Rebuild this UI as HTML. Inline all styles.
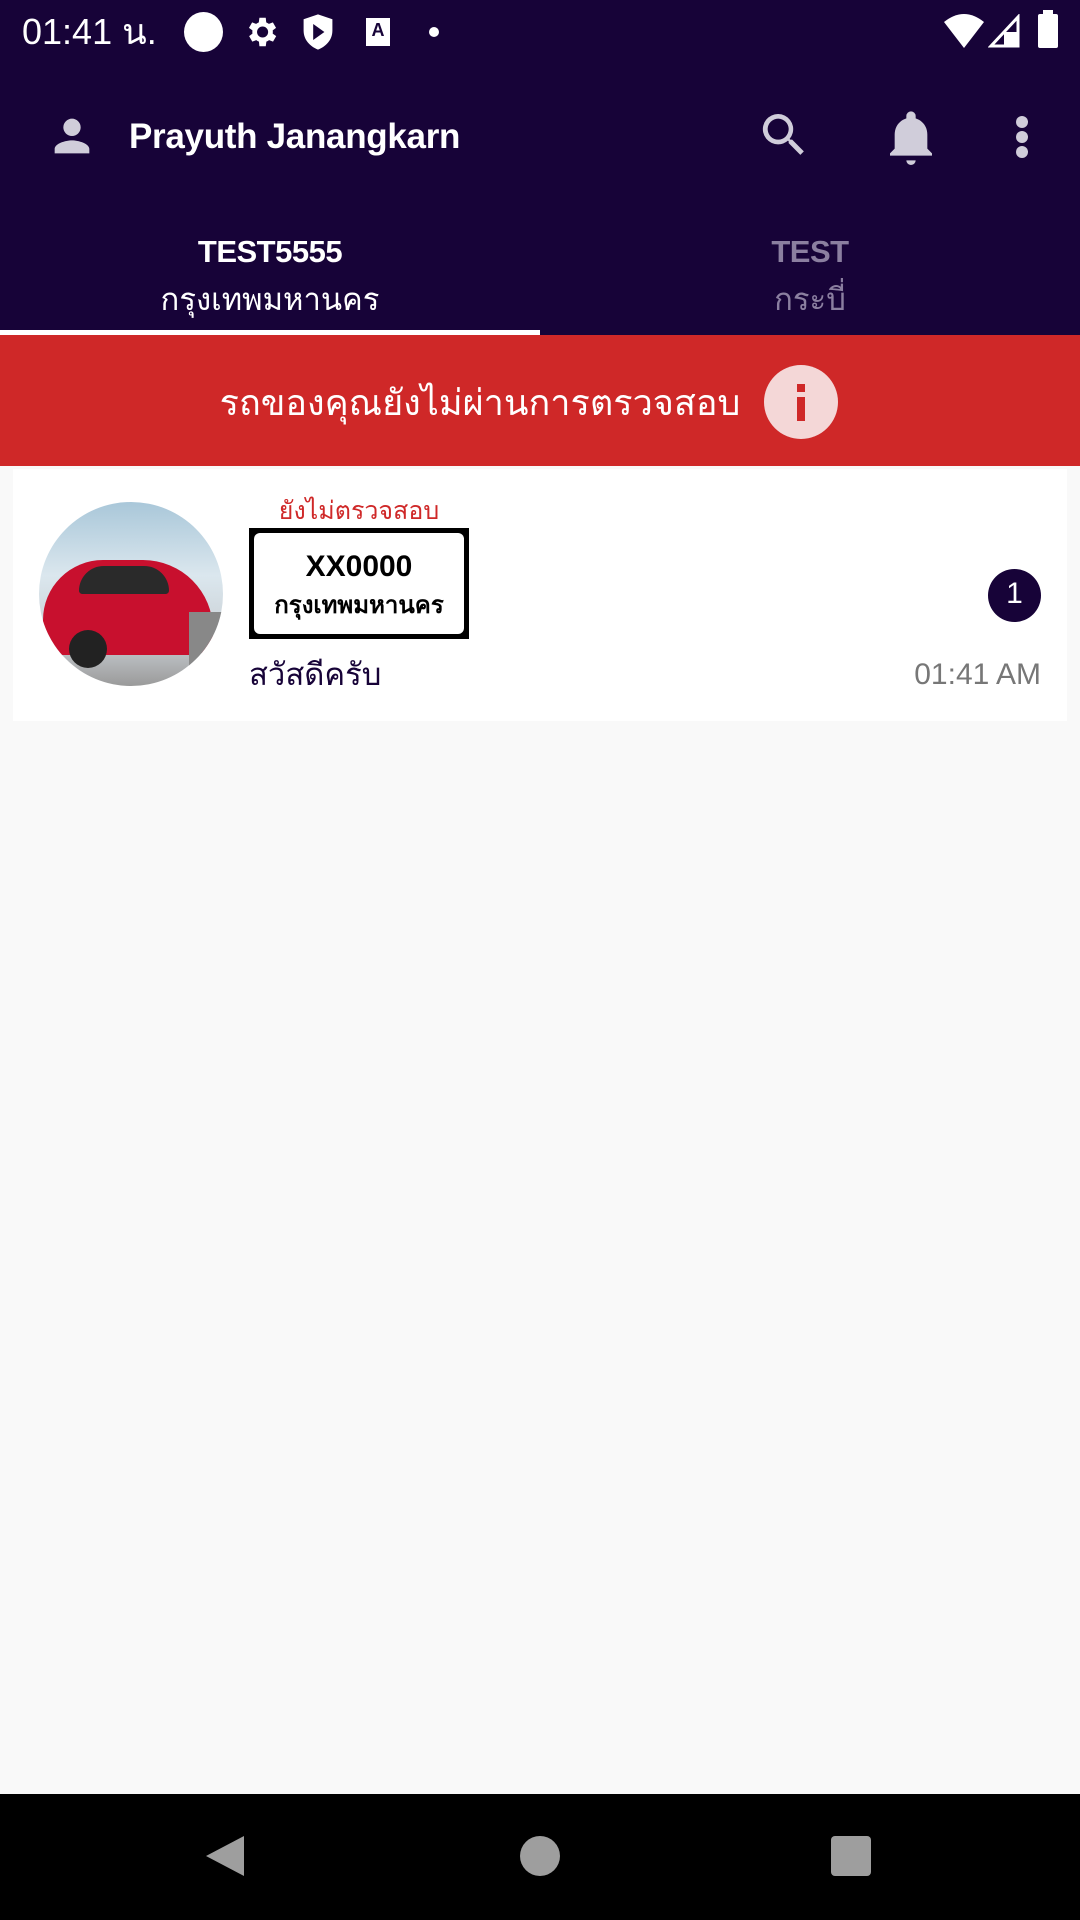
<!DOCTYPE html>
<html><head><meta charset="utf-8"><style>
*{margin:0;padding:0;box-sizing:border-box}
body{width:1080px;height:1920px;background:#f9f9f9;font-family:"Liberation Sans","Noto Sans CJK SC",sans-serif;position:relative;overflow:hidden}
.abs{position:absolute}
</style></head><body>
<div class="abs" style="left:0;top:0;width:1080px;height:335px;background:#170338"></div>
<!-- status bar -->
<div class="abs" style="left:22px;top:12px;color:#fff;font-size:36px;line-height:40px">01:41 น.</div>
<div class="abs" style="left:184px;top:12px;width:39px;height:40px;border-radius:50%;background:#fff"></div>
<svg class="abs" style="left:242px;top:12px" width="38" height="40" viewBox="0 0 24 24"><path fill="#fff" d="M19.4 13a7.5 7.5 0 000-2l2.1-1.6-2-3.5-2.5 1a7 7 0 00-1.700-1L15 3h-4l-.4 2.9a7 7 0 00-1.7 1l-2.5-1-2 3.5L6.6 11a7.5 7.5 0 000 2l-2.1 1.6 2 3.5 2.5-1a7 7 0 001.7 1L11 21h4l.4-2.9a7 7 0 001.7-1l2.5 1 2-3.5zM13 15.5a3.5 3.5 0 110-7 3.5 3.5 0 010 7z"/></svg>
<svg class="abs" style="left:302px;top:12px" width="32" height="40" viewBox="0 0 20 24"><path fill="#fff" d="M10 1L1 4v7c0 6 4 10 9 12 5-2 9-6 9-12V4z"/><path fill="#170338" d="M7 7v10l7-5z"/></svg>
<div class="abs" style="left:366px;top:18px;width:24px;height:28px;background:#fff;color:#170338;font-size:18px;font-weight:bold;text-align:center;line-height:24px">A</div>
<div class="abs" style="left:429px;top:27px;width:10px;height:10px;border-radius:50%;background:#fff"></div>
<svg class="abs" style="left:944px;top:14px" width="40" height="34" viewBox="0 0 40 34"><path fill="#fff" d="M0 8Q20-8 40 8L20 34z"/></svg>
<svg class="abs" style="left:988px;top:14px" width="32" height="34" viewBox="0 0 32 34"><path fill="none" stroke="#fff" stroke-width="3" d="M30 3V32H3z"/><path fill="#fff" d="M16 18h14v14H16z"/></svg>
<div class="abs" style="left:1038px;top:14px;width:20px;height:34px;background:#fff;border-radius:2px"></div>
<div class="abs" style="left:1043px;top:10px;width:10px;height:6px;background:#fff"></div>
<!-- toolbar -->
<svg class="abs" style="left:46px;top:110px" width="52" height="52" viewBox="0 0 24 24"><path fill="#d0cdda" d="M12 12a4 4 0 100-8 4 4 0 000 8zm0 2c-3 0-8 1.5-8 4v2h16v-2c0-2.5-5-4-8-4z"/></svg>
<div class="abs" style="left:129px;top:116px;color:#fff;font-size:35px;font-weight:bold;line-height:42px;letter-spacing:-0.3px">Prayuth Janangkarn</div>
<svg class="abs" style="left:756px;top:107px" width="56" height="56" viewBox="0 0 24 24"><path fill="#d0cdda" d="M15.5 14h-.8l-.3-.3A6.5 6.5 0 109.5 16a6.5 6.5 0 004.2-1.6l.3.3v.8l5 5 1.5-1.5zm-6 0a4.5 4.5 0 110-9 4.5 4.5 0 010 9z"/></svg>
<svg class="abs" style="left:883px;top:106px" width="56" height="62" viewBox="0 0 24 26"><path fill="#d0cdda" d="M12 25a2 2 0 002-2h-4a2 2 0 002 2zm7-7v-6c0-3.5-2-6-5-7V4a2 2 0 00-4 0v1c-3 1-5 3.5-5 7v6l-2 2v1h18v-1z"/></svg>
<div class="abs" style="left:1016px;top:116px;width:12px;height:12px;border-radius:50%;background:#d0cdda"></div>
<div class="abs" style="left:1016px;top:131px;width:12px;height:12px;border-radius:50%;background:#d0cdda"></div>
<div class="abs" style="left:1016px;top:146px;width:12px;height:12px;border-radius:50%;background:#d0cdda"></div>
<!-- tabs -->
<div class="abs" style="left:0;top:234px;width:540px;text-align:center;color:#fff;font-size:31px;font-weight:bold;letter-spacing:-0.5px">TEST5555</div>
<div class="abs" style="left:0;top:274px;width:540px;text-align:center;color:#fff;font-size:31px">กรุงเทพมหานคร</div>
<div class="abs" style="left:540px;top:234px;width:540px;text-align:center;color:#8b7fa0;font-size:31px;font-weight:bold;letter-spacing:-0.5px">TEST</div>
<div class="abs" style="left:540px;top:274px;width:540px;text-align:center;color:#8b7fa0;font-size:31px">กระบี่</div>
<div class="abs" style="left:0;top:330px;width:540px;height:5px;background:#fff"></div>
<!-- banner -->
<div class="abs" style="left:0;top:335px;width:1080px;height:131px;background:#cf2828"></div>
<div class="abs" style="left:190px;top:380px;width:580px;text-align:center;color:#fff;font-size:36px;line-height:46px">รถของคุณยังไม่ผ่านการตรวจสอบ</div>
<div class="abs" style="left:764px;top:365px;width:74px;height:74px;border-radius:50%;background:#f4d7d7"></div>
<div class="abs" style="left:797px;top:384px;width:8px;height:8px;background:#cf2828"></div>
<div class="abs" style="left:797px;top:397px;width:8px;height:24px;background:#cf2828"></div>
<!-- card -->
<div class="abs" style="left:13px;top:469px;width:1054px;height:252px;background:#fff"></div>
<div class="abs" style="left:39px;top:502px;width:184px;height:184px;border-radius:50%;overflow:hidden;background:linear-gradient(180deg,#a9c7d9 0%,#dbe7ee 40%,#c9cfd4 75%,#9a9a9a 100%)">
<div class="abs" style="left:4px;top:58px;width:170px;height:95px;background:#c8102e;border-radius:60px 70px 20px 20px"></div>
<div class="abs" style="left:40px;top:64px;width:90px;height:28px;background:#2a2a2a;border-radius:30px 30px 4px 4px"></div>
<div class="abs" style="left:30px;top:128px;width:38px;height:38px;border-radius:50%;background:#222"></div>
<div class="abs" style="left:150px;top:110px;width:34px;height:60px;background:#888"></div>
</div>
<div class="abs" style="left:249px;top:496px;width:220px;text-align:center;color:#cf2828;font-size:25px;line-height:30px">ยังไม่ตรวจสอบ</div>
<div class="abs" style="left:249px;top:528px;width:220px;height:111px;background:#000;padding:5px"><div style="background:#fff;width:100%;height:100%;border-radius:6px;text-align:center;padding-top:17px"><div style="font-size:30px;font-weight:bold;line-height:34px">XX0000</div><div style="font-size:24px;font-weight:bold;line-height:36px;margin-top:4px">กรุงเทพมหานคร</div></div></div>
<div class="abs" style="left:249px;top:655px;color:#170338;font-size:31px;line-height:40px">สวัสดีครับ</div>
<div class="abs" style="left:820px;top:655px;width:221px;text-align:right;color:#777;font-size:30px;line-height:40px">01:41 AM</div>
<div class="abs" style="left:988px;top:569px;width:53px;height:53px;border-radius:50%;background:#170338;color:#fff;font-size:30px;text-align:center;line-height:50px">1</div>
<!-- nav -->
<div class="abs" style="left:0;top:1794px;width:1080px;height:126px;background:#000"></div>
<svg class="abs" style="left:204px;top:1834px" width="42" height="44" viewBox="0 0 42 44"><path fill="#9e9e9e" d="M40 2V42L2 22z"/></svg>
<div class="abs" style="left:520px;top:1836px;width:40px;height:40px;border-radius:50%;background:#9e9e9e"></div>
<div class="abs" style="left:831px;top:1836px;width:40px;height:40px;border-radius:4px;background:#9e9e9e"></div>
</body></html>
